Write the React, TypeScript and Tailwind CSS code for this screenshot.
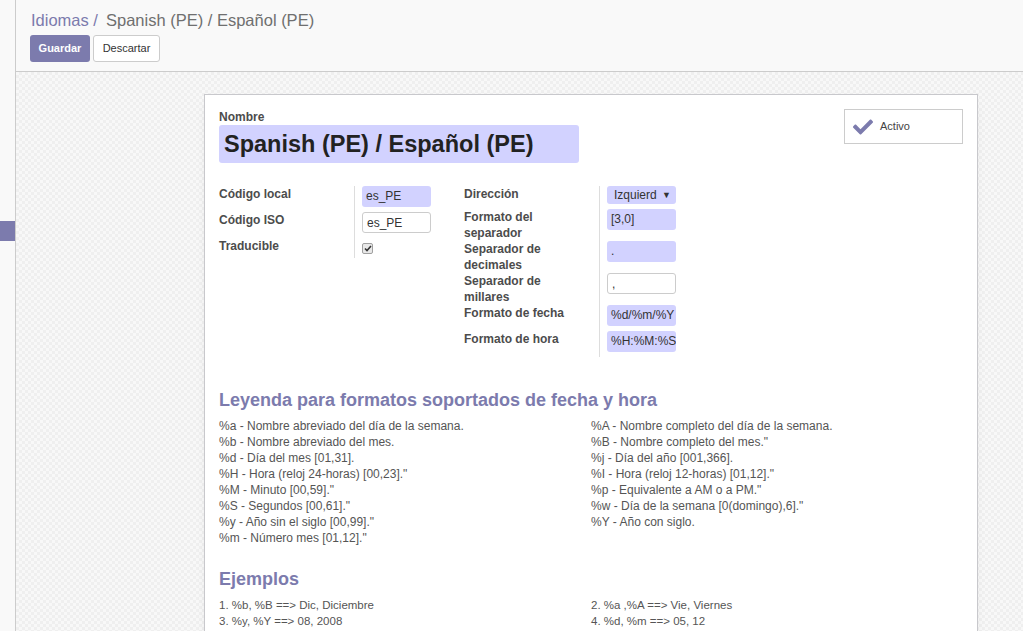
import { FaCheck } from 'react-icons/fa';

const leftRows = [
  { label: 'Código local', h: 'h-[26px]', kind: 'req', value: 'es_PE' },
  { label: 'Código ISO', h: 'h-[26px]', kind: 'plain', value: 'es_PE' },
  { label: 'Traducible', h: 'h-[20px]', kind: 'check', value: '' },
];

const rightRows = [
  { label: 'Dirección', h: 'h-[23px]', kind: 'select', value: 'Izquierd' },
  { label: 'Formato del separador', h: 'h-[32px]', kind: 'req', value: '[3,0]' },
  { label: 'Separador de decimales', h: 'h-[32px]', kind: 'req', value: '.' },
  { label: 'Separador de millares', h: 'h-[32px]', kind: 'plain', value: ',' },
  { label: 'Formato de fecha', h: 'h-[26px]', kind: 'req', value: '%d/%m/%Y' },
  { label: 'Formato de hora', h: 'h-[26px]', kind: 'req', value: '%H:%M:%S' },
];

const legendLeft = [
  '%a - Nombre abreviado del día de la semana.',
  '%b - Nombre abreviado del mes.',
  '%d - Día del mes [01,31].',
  '%H - Hora (reloj 24-horas) [00,23]."',
  '%M - Minuto [00,59]."',
  '%S - Segundos [00,61]."',
  '%y - Año sin el siglo [00,99]."',
  '%m - Número mes [01,12]."',
];

const legendRight = [
  '%A - Nombre completo del día de la semana.',
  '%B - Nombre completo del mes."',
  '%j - Día del año [001,366].',
  '%I - Hora (reloj 12-horas) [01,12]."',
  '%p - Equivalente a AM o a PM."',
  '%w - Día de la semana [0(domingo),6]."',
  '%Y - Año con siglo.',
];

type Row = { label: string; h: string; kind: string; value: string };

function Field({ kind, value }: { kind: string; value: string }) {
  if (kind === 'check') {
    return (
      <div className="mt-[5px] flex h-[11px] w-[11px] items-center justify-center rounded-[2px] border border-[#a0a0a0] bg-[#e8e8e8]">
        <svg width="8" height="7" viewBox="0 0 8 7">
          <path d="M1 3.5 L3 5.5 L7 1" fill="none" stroke="#333" strokeWidth="1.6" />
        </svg>
      </div>
    );
  }
  if (kind === 'select') {
    return (
      <div className="flex h-[18px] w-[69px] items-center justify-between rounded-[3px] bg-[#d2d2ff] pl-[7px] pr-[5px] text-[12px] leading-[18px] text-[#333]">
        <span>{value}</span>
        <span className="text-[9px]">▼</span>
      </div>
    );
  }
  return (
    <div
      className={`h-[21px] w-[69px] overflow-hidden whitespace-nowrap rounded-[3px] px-[4px] text-[12px] leading-[20px] text-[#333] ${
        kind === 'req' ? 'bg-[#d2d2ff]' : 'border border-[#ccc] bg-white'
      }`}
    >
      {value}
    </div>
  );
}

function Group({ rows, width }: { rows: Row[]; width: string }) {
  return (
    <div className={`grid grid-cols-[135px_1fr] content-start ${width}`}>
      {rows.map((r) => (
        <div key={r.label} className="contents">
          <div className={`${r.h} pr-[12px] text-[12px] font-bold leading-[16px] text-[#4c4c4c]`}>{r.label}</div>
          <div className={`${r.h} border-l border-[#ddd] pl-[7px]`}>
            <Field kind={r.kind} value={r.value} />
          </div>
        </div>
      ))}
    </div>
  );
}

export default function App() {
  return (
    <div className="flex h-[631px] w-[1023px] overflow-hidden font-['Liberation_Sans',Arial,sans-serif]">
      {/* app sidebar */}
      <aside className="w-4 shrink-0 border-r border-[#ccc] bg-[#f9f9f9] pt-[221px]">
        <div className="h-[20px] bg-[#7c7bad]" />
      </aside>

      <main className="flex flex-1 flex-col">
        {/* control panel */}
        <header className="h-[72px] shrink-0 border-b border-[#ccc] bg-[#f9f9f9] pl-[14px] pt-[9px]">
          <div className="ml-px text-[16.5px] leading-[22px]">
            <span className="text-[#7c7bad]">Idiomas /</span>
            <span className="ml-[8px] text-[#6f6f6f]">Spanish (PE) / Español (PE)</span>
          </div>
          <div className="mt-[4px] flex gap-[3px]">
            <button className="h-[27px] w-[60px] rounded-[3px] bg-[#7c7bad] text-[11px] font-bold text-white">Guardar</button>
            <button className="h-[27px] w-[67px] rounded-[3px] border border-[#ccc] bg-white text-[11px] text-[#333]">Descartar</button>
          </div>
        </header>

        {/* form view */}
        <div className="flex-1 overflow-hidden bg-[#f4f4f4] bg-[conic-gradient(#efefef_25%,#f8f8f8_0_50%,#efefef_0_75%,#f8f8f8_0)] bg-[length:6px_6px] pt-[22px]">
          <div className="ml-[188px] h-[700px] w-[774px] border border-[#c8c8cc] bg-white px-[14px] pt-[14px] shadow-[0_4px_12px_-6px_rgba(0,0,0,0.15)]">
            <div className="flex justify-between">
              <div>
                <div className="text-[12px] font-bold leading-[16px] text-[#4c4c4c]">Nombre</div>
                <div className="h-[38px] w-[360px] rounded-[3px] bg-[#d2d2ff] px-[5px] text-[23.5px] font-bold leading-[38px] text-[#222]">
                  Spanish (PE) / Español (PE)
                </div>
              </div>
              <button className="flex h-[35px] w-[119px] items-center gap-[7px] border border-[#ccc] bg-white pl-[8px] text-[11px] text-[#444]">
                <FaCheck size={20} color="#7c7bad" />
                <span>Activo</span>
              </button>
            </div>

            <div className="mt-[23px] flex items-start">
              <Group rows={leftRows} width="w-[245px]" />
              <Group rows={rightRows} width="w-[280px]" />
            </div>

            <h3 className="mt-[32px] text-[18px] font-bold leading-[22px] text-[#7c7bad]">
              Leyenda para formatos soportados de fecha y hora
            </h3>
            <div className="mt-[7px] grid grid-cols-2 text-[12px] leading-[16px] text-[#555]">
              <div>
                {legendLeft.map((t) => (
                  <div key={t}>{t}</div>
                ))}
              </div>
              <div>
                {legendRight.map((t) => (
                  <div key={t}>{t}</div>
                ))}
              </div>
            </div>

            <h3 className="mt-[22px] text-[18px] font-bold leading-[22px] text-[#7c7bad]">Ejemplos</h3>
            <div className="mt-[7px] grid grid-cols-2 text-[11.5px] leading-[16px] text-[#555]">
              <div>1. %b, %B ==&gt; Dic, Diciembre</div>
              <div>2. %a ,%A ==&gt; Vie, Viernes</div>
              <div>3. %y, %Y ==&gt; 08, 2008</div>
              <div>4. %d, %m ==&gt; 05, 12</div>
            </div>
          </div>
        </div>
      </main>
    </div>
  );
}
